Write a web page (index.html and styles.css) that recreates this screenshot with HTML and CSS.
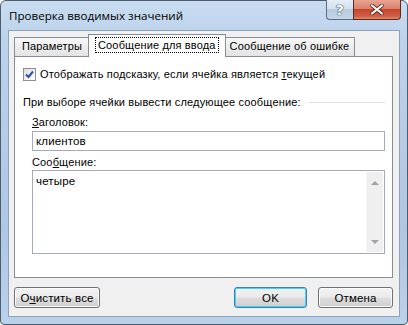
FILE: index.html
```html
<!DOCTYPE html>
<html lang="ru">
<head>
    <meta charset="UTF-8">
    <title>Проверка вводимых значений</title>
    <link rel="stylesheet" href="styles.css">
</head>
<body>
    <div class="window">
        <div class="titlebar">
            <span class="title">Проверка вводимых значений</span>
            <div class="caption-buttons">
                <div class="cap-btn help">?</div>
                <div class="cap-btn close">
                    <svg width="14" height="11" viewBox="0 0 14 11">
                        <path d="M2 1.5 L12 9.5 M12 1.5 L2 9.5" stroke="#5a2418" stroke-width="3.6" stroke-linecap="round"/>
                        <path d="M2 1.5 L12 9.5 M12 1.5 L2 9.5" stroke="#ffffff" stroke-width="2.2" stroke-linecap="round"/>
                    </svg>
                </div>
            </div>
        </div>

        <div class="client">
            <!-- Вкладки -->
            <div class="tabs">
                <div class="tab first">Параметры</div>
                <div class="tab active"><span class="focus">Сообщение для ввода</span></div>
                <div class="tab">Сообщение об ошибке</div>
            </div>

            <div class="panel">
                <div class="check-row">
                    <span class="checkbox">
                        <svg width="9" height="9" viewBox="0 0 9 9">
                            <path d="M1 4.5 L3.5 7 L8 1.5" fill="none" stroke="#2a4fa8" stroke-width="2"/>
                        </svg>
                    </span>
                    <span>Отображать подсказку, если ячейка является <u>т</u>екущей</span>
                </div>

                <div class="group-title">
                    <span>При выборе ячейки вывести следующее сообщение:</span>
                    <span class="line"></span>
                </div>

                <div class="field-label"><u>З</u>аголовок:</div>
                <div class="input">клиентов</div>

                <div class="field-label">Соо<u>б</u>щение:</div>
                <div class="textarea">
                    <div class="text">четыре</div>
                    <div class="scrollbar">
                        <span class="arrow up"></span>
                        <span class="arrow down"></span>
                    </div>
                </div>
            </div>

            <div class="buttons">
                <button class="btn">О<u>ч</u>истить все</button>
                <div class="spacer"></div>
                <button class="btn default">OK</button>
                <button class="btn">Отмена</button>
            </div>
        </div>
    </div>
</body>
</html>
```

FILE: styles.css
```css
* {
    margin: 0;
    padding: 0;
    box-sizing: border-box;
}

body {
    width: 408px;
    height: 325px;
    overflow: hidden;
    background: #ffffff;
    font-family: "Liberation Sans", Arial, sans-serif;
    font-size: 11px;
    letter-spacing: 0.15px;
    color: #000000;
}

/* Рамка окна (Aero) */
.window {
    width: 408px;
    height: 325px;
    display: flex;
    flex-direction: column;
    padding: 0 7px 7px 7px;
    border: 1px solid #4d5d70;
    border-radius: 6px 6px 4px 4px;
    background: linear-gradient(180deg, #c9dcf0 0%, #bcd3ec 12%, #b6cde8 40%, #aec7e3 70%, #bad1ea 100%);
}

.titlebar {
    height: 29px;
    display: flex;
    justify-content: space-between;
    align-items: flex-start;
}

.title {
    font-family: "Open Sans", "Noto Sans", sans-serif;
    font-size: 11.6px;
    letter-spacing: 0;
    line-height: 29px;
    padding-left: 1px;
    color: #000000;
}

.caption-buttons {
    display: flex;
    margin-top: -1px;
    margin-right: -1px;
}

.cap-btn {
    height: 20px;
    display: flex;
    align-items: center;
    justify-content: center;
    border: 1px solid #5b6b80;
    border-top: none;
}

.help {
    width: 27px;
    border-right: none;
    border-radius: 0 0 0 4px;
    background: linear-gradient(180deg, #e6eef7 0%, #d3e0ee 45%, #b8cadf 50%, #c6d6e8 100%);
    font-family: "DejaVu Sans", sans-serif;
    font-weight: bold;
    font-size: 14px;
    color: #ffffff;
    text-shadow: 0 0 1px #3c4d63, 0 0 1px #3c4d63, 0 0 1px #3c4d63;
}

.close {
    width: 48px;
    border-color: #5a2a22;
    border-radius: 0 0 4px 0;
    background: linear-gradient(180deg, #e8a593 0%, #d9826c 45%, #c7452d 50%, #d05e45 85%, #e08a6c 100%);
}

/* Клиентская область */
.client {
    flex: 1;
    display: flex;
    flex-direction: column;
    padding: 3px 6px 0 5px;
    background: #f0f0f0;
    border: 1px solid #8da2bb;
}

.tabs {
    display: flex;
    align-items: flex-end;
    margin-bottom: -1px;
    position: relative;
    z-index: 1;
}

.tab {
    height: 19px;
    margin-bottom: 1px;
    padding: 0 5px;
    line-height: 17px;
    border: 1px solid #898c95;
    border-bottom: none;
    background: linear-gradient(180deg, #f7f7f7 0%, #ebebeb 60%, #e3e3e3 100%);
    white-space: nowrap;
}

.tab.first {
    padding: 0 7px;
}

.tab.active {
    height: 23px;
    margin: 0 -2px;
    padding: 2px 6px 0 6px;
    background: #ffffff;
    position: relative;
    z-index: 1;
}

.focus {
    display: inline-block;
    padding: 0 2px;
    line-height: 14px;
    border: 1px dotted #000000;
}

.panel {
    height: 222px;
    display: flex;
    flex-direction: column;
    background: #ffffff;
    border: 1px solid #898c95;
    padding: 11px 7px 0 8px;
}

.check-row {
    display: flex;
    align-items: center;
    gap: 4px;
    height: 13px;
    line-height: 13px;
}

.checkbox {
    width: 13px;
    height: 13px;
    display: flex;
    align-items: center;
    justify-content: center;
    border: 1px solid #8e8f8f;
    background: linear-gradient(135deg, #dcdcdc 0%, #f4f4f4 60%, #ffffff 100%);
}

.group-title {
    display: flex;
    align-items: center;
    gap: 8px;
    margin-top: 15px;
    line-height: 13px;
}

.group-title .line {
    flex: 1;
    height: 1px;
    background: #dcdfe4;
}

.field-label {
    margin-top: 7px;
    padding-left: 9px;
    line-height: 13px;
}

.input {
    margin: 2px 0 0 9px;
    height: 20px;
    padding: 0 3px;
    line-height: 18px;
    border: 1px solid #a5acb5;
    font-size: 11.5px;
}

.input + .field-label {
    margin-top: 5px;
}

.textarea {
    margin: 1px 0 0 9px;
    height: 84px;
    display: flex;
    border: 1px solid #a5acb5;
}

.textarea .text {
    flex: 1;
    padding: 4px 3px;
    line-height: 13px;
    font-size: 11.5px;
}

.scrollbar {
    width: 17px;
    margin: 1px 1px 1px 0;
    display: flex;
    flex-direction: column;
    justify-content: space-between;
    align-items: center;
    padding: 9px 0 8px 0;
    background: #efefef;
    border-left: 1px solid #f7f7f7;
}

.arrow {
    width: 0;
    height: 0;
    border-left: 4px solid transparent;
    border-right: 4px solid transparent;
}

.arrow.up {
    border-bottom: 4px solid #a3a3a3;
}

.arrow.down {
    border-top: 4px solid #a3a3a3;
}

/* Кнопки */
.buttons {
    display: flex;
    margin-top: 9px;
    gap: 11px;
}

.spacer {
    flex: 1;
}

.btn {
    height: 21px;
    padding: 0;
    font-family: "Liberation Sans", Arial, sans-serif;
    font-size: 11.5px;
    letter-spacing: 0.15px;
    color: #000000;
    border: 1px solid #707070;
    border-radius: 3px;
    background: linear-gradient(180deg, #f2f2f2 0%, #ebebeb 48%, #dddddd 52%, #cfcfcf 100%);
    box-shadow: inset 0 0 0 1px #fbfbfb;
    width: 75px;
}

.btn:first-child {
    width: 86px;
}

.btn.default {
    width: 73px;
    border-color: #3c7fb1;
    box-shadow: inset 0 0 0 1px #48d0ff;
}
```
